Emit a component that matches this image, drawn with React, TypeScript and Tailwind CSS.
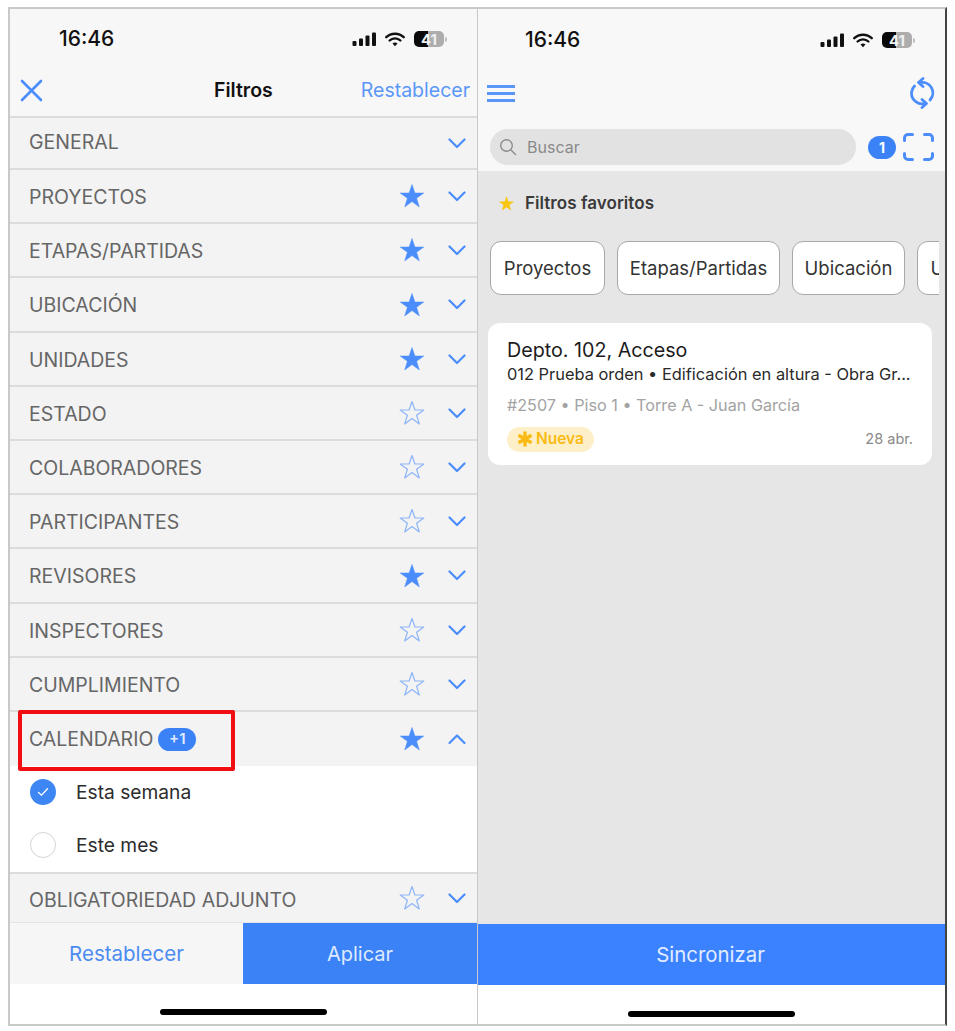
import React from "react";

const BLUE = "#4b8dfb";

function Star({ filled }: { filled: boolean }) {
  return (
    <svg width="26" height="26" viewBox="0 0 26 26" className="shrink-0">
      <path
        d="M13 1.5 L15.9 10 L24.8 10 L17.6 15.3 L20.3 23.9 L13 18.6 L5.7 23.9 L8.4 15.3 L1.2 10 L10.1 10 Z"
        fill={filled ? BLUE : "none"}
        stroke={filled ? BLUE : "#8db5f8"}
        strokeWidth={filled ? 0.5 : 1.2}
        strokeLinejoin="round"
      />
    </svg>
  );
}

function Chevron({ up }: { up?: boolean }) {
  return (
    <svg width="18" height="12" viewBox="0 0 18 12" className="mb-[1px] shrink-0">
      <path
        d={up ? "M1.5 10 L9 2.5 L16.5 10" : "M1.5 2.5 L9 10 L16.5 2.5"}
        fill="none"
        stroke={BLUE}
        strokeWidth="2.2"
        strokeLinecap="round"
        strokeLinejoin="round"
      />
    </svg>
  );
}

function StatusBar({ pad }: { pad: string }) {
  return (
    <div className={`flex items-center justify-between ${pad}`}>
      <span className="text-[21px] font-medium leading-[26px] text-[#111]">16:46</span>
      <div className="flex items-center">
        <svg width="25" height="14" viewBox="0 0 25 14" className="fill-[#111]">
          <rect x="0.5" y="9" width="4" height="5" rx="1" />
          <rect x="7" y="6.5" width="4" height="7.5" rx="1" />
          <rect x="13.5" y="3.5" width="4" height="10.5" rx="1" />
          <rect x="20" y="0.5" width="4" height="13.5" rx="1" />
        </svg>
        <svg width="20" height="15" viewBox="0 0 20 15" className="ml-[8px]">
          <path d="M1.3 5.2 C6 0.6 14 0.6 18.7 5.2" fill="none" stroke="#111" strokeWidth="2.4" strokeLinecap="round" />
          <path d="M4.6 8.5 C7.5 5.6 12.5 5.6 15.4 8.5" fill="none" stroke="#111" strokeWidth="2.4" strokeLinecap="round" />
          <path d="M7.5 11.4 L10 14.2 L12.5 11.4 C11 10.2 9 10.2 7.5 11.4 Z" fill="#111" />
        </svg>
        <div className="ml-[9px] flex h-[16px] w-[30px] items-center justify-center rounded-[5px] bg-[linear-gradient(90deg,#0a0a0a_47%,#adadad_47%)] text-[15px] font-bold leading-none text-[#f0f0f0]">
          41
        </div>
        <div className="ml-[1px] h-[5px] w-[2px] rounded-r-sm bg-[#bbbbbb]" />
      </div>
    </div>
  );
}

const rows: { label: string; fav: boolean; noStar?: boolean; h: string }[] = [
  { label: "GENERAL", fav: false, noStar: true, h: "h-[52px]" },
  { label: "PROYECTOS", fav: true, h: "h-[54px]" },
  { label: "ETAPAS/PARTIDAS", fav: true, h: "h-[54px]" },
  { label: "UBICACIÓN", fav: true, h: "h-[55px]" },
  { label: "UNIDADES", fav: true, h: "h-[54px]" },
  { label: "ESTADO", fav: false, h: "h-[54px]" },
  { label: "COLABORADORES", fav: false, h: "h-[54px]" },
  { label: "PARTICIPANTES", fav: false, h: "h-[54px]" },
  { label: "REVISORES", fav: true, h: "h-[55px]" },
  { label: "INSPECTORES", fav: false, h: "h-[54px]" },
  { label: "CUMPLIMIENTO", fav: false, h: "h-[54px]" },
];

function FilterRow({ label, fav, noStar, h }: { label: string; fav: boolean; noStar?: boolean; h: string }) {
  return (
    <div className={`flex items-center justify-between border-b-2 border-[#dcdcdc] bg-[#f3f3f3] pl-[19px] pr-[11px] ${h}`}>
      <span className={`text-[19.5px] text-[#666666] ${noStar ? "" : "mt-[3px]"}`}>{label}</span>
      <div className="flex items-center gap-[23px]">
        {!noStar && <Star filled={fav} />}
        <Chevron />
      </div>
    </div>
  );
}

function Chip({ label, w }: { label: string; w: string }) {
  return (
    <div className={`flex h-[54px] shrink-0 items-center justify-center rounded-[11px] border border-[#a8a8a8] bg-white pt-[2px] text-[18.5px] text-[#333333] ${w}`}>
      {label}
    </div>
  );
}

export default function App() {
  return (
    <div className="flex h-[1031px] w-[955px] items-start bg-white pl-[8px] pt-[7px] font-['Inter','Liberation_Sans',sans-serif]">
      {/* Left phone */}
      <div className="flex h-[1019px] w-[471px] shrink-0 flex-col border-2 border-[#c9c9c9] bg-white">
        <div className="flex h-[109px] shrink-0 flex-col border-b-2 border-[#dcdcdc] bg-[#f7f7f7]">
          <StatusBar pad="pl-[49px] pr-[30px] pt-[17px]" />
          <div className="mt-[24px] flex items-center justify-between pl-[10px] pr-[7px]">
            <svg width="23" height="23" viewBox="0 0 23 23">
              <path d="M2 2 L21 21 M21 2 L2 21" stroke={BLUE} strokeWidth="2.6" strokeLinecap="round" />
            </svg>
            <span className="ml-[83px] text-[19.5px] font-semibold text-[#111]">Filtros</span>
            <span className="text-[19.5px] text-[#5a97f8]">Restablecer</span>
          </div>
        </div>
        {rows.map((r) => (
          <FilterRow key={r.label} {...r} />
        ))}
        <div className="relative flex h-[54px] shrink-0 items-center justify-between bg-[#f3f3f3] pl-[19px] pr-[11px]">
          <div className="flex items-center gap-[5px]">
            <span className="mt-[2px] text-[19.5px] text-[#666666]">CALENDARIO</span>
            <span className="flex h-[23px] w-[38px] items-center justify-center rounded-full bg-[#3b82f6] text-[15px] font-semibold text-[#dfeaff]">
              +1
            </span>
          </div>
          <div className="flex items-center gap-[23px]">
            <Star filled />
            <Chevron up />
          </div>
          <div className="absolute left-[8px] top-[-2px] h-[61px] w-[217px] rounded-[2px] border-[4px] border-[#f20d12]" />
        </div>
        <div className="flex h-[108px] shrink-0 flex-col border-b-2 border-[#dcdcdc] bg-white pl-[20px]">
          <div className="flex h-[52px] items-center gap-[20px]">
            <div className="flex h-[26px] w-[26px] items-center justify-center rounded-full bg-[#3f86f5]">
              <svg width="12" height="10" viewBox="0 0 12 10">
                <path d="M1.5 5.5 L4.5 8.2 L10.5 1.8" fill="none" stroke="white" strokeWidth="1.3" strokeLinecap="round" />
              </svg>
            </div>
            <span className="text-[19.2px] text-[#2c2c2c]">Esta semana</span>
          </div>
          <div className="flex h-[54px] items-center gap-[20px]">
            <div className="h-[26px] w-[26px] rounded-full border border-[#d4d4d4]" />
            <span className="text-[19.2px] text-[#2c2c2c]">Este mes</span>
          </div>
        </div>
        <div className="flex h-[49px] shrink-0 items-center justify-between border-b border-[#e4e4e4] bg-[#f3f3f3] pl-[19px] pr-[11px]">
          <span className="mt-[5px] text-[19.5px] text-[#666666]">OBLIGATORIEDAD ADJUNTO</span>
          <div className="flex items-center gap-[23px]">
            <Star filled={false} />
            <Chevron />
          </div>
        </div>
        <div className="flex h-[61px] shrink-0">
          <div className="flex w-[233px] items-center justify-center bg-[#f6f6f6] pt-[2px] text-[20.5px] text-[#4c8bf0]">Restablecer</div>
          <div className="flex flex-1 items-center justify-center bg-[#3b82f6] text-[20px] text-[#dfeaff]">Aplicar</div>
        </div>
        <div className="flex flex-1 items-end justify-center pb-[9px]">
          <div className="h-[6px] w-[167px] rounded-full bg-black" />
        </div>
      </div>

      {/* Right phone */}
      <div className="-ml-[1px] flex h-[1019px] w-[469px] shrink-0 flex-col border-y-2 border-r-2 border-y-[#c9c9c9] border-r-[#444444] bg-white">
        <div className="flex h-[162px] shrink-0 flex-col bg-[#f8f8f8]">
          <StatusBar pad="pl-[47px] pr-[30px] pt-[18px]" />
          <div className="mt-[24px] flex h-[32px] items-center justify-between pl-[9px] pr-[9px]">
            <div className="flex w-[28px] flex-col gap-[4px]">
              <div className="h-[3px] bg-[#5a97f8]" />
              <div className="h-[3px] bg-[#5a97f8]" />
              <div className="h-[3px] bg-[#5a97f8]" />
            </div>
            <svg width="26" height="32" viewBox="0 0 26 32" fill="none">
              <path d="M10 5.6 A10.5 10.5 0 0 1 20 23" stroke={BLUE} strokeWidth="2.8" strokeLinecap="round" />
              <path d="M4.5 9 A10.5 10.5 0 0 0 15 26.4" stroke={BLUE} strokeWidth="2.8" strokeLinecap="round" />
              <path d="M13 1.5 L8.5 5.5 L13 9.5" stroke={BLUE} strokeWidth="2.8" strokeLinecap="round" strokeLinejoin="round" />
              <path d="M12 22.5 L16.5 26.5 L12 30.5" stroke={BLUE} strokeWidth="2.8" strokeLinecap="round" strokeLinejoin="round" />
            </svg>
          </div>
          <div className="mt-[20px] flex items-center pl-[12px]">
            <div className="flex h-[36px] w-[366px] items-center rounded-full bg-[#e2e2e2] pl-[9px]">
              <svg width="18" height="18" viewBox="0 0 18 18" fill="none">
                <circle cx="7.5" cy="7.5" r="5.8" stroke="#8d8d8d" strokeWidth="1.4" />
                <path d="M12 12 L16.5 16.5" stroke="#8d8d8d" strokeWidth="1.4" strokeLinecap="round" />
              </svg>
              <span className="ml-[10px] text-[16px] text-[#8a8a8a]">Buscar</span>
            </div>
            <div className="ml-[12px] flex h-[23px] w-[28px] items-center justify-center rounded-full bg-[#3b82f6] text-[14px] font-bold text-white">1</div>
            <svg width="31" height="28" viewBox="0 0 31 28" fill="none" className="ml-[7px]">
              <path
                d="M1.5 7.5 V5 A3.5 3.5 0 0 1 5 1.5 H9.5 M21.5 1.5 H26 A3.5 3.5 0 0 1 29.5 5 V7.5 M29.5 20.5 V23 A3.5 3.5 0 0 1 26 26.5 H21.5 M9.5 26.5 H5 A3.5 3.5 0 0 1 1.5 23 V20.5"
                stroke={BLUE}
                strokeWidth="3"
                strokeLinecap="round"
              />
            </svg>
          </div>
        </div>
        <div className="flex flex-1 flex-col bg-[#e6e6e6]">
          <div className="mt-[20px] flex items-center pl-[20px]">
            <svg width="17" height="17" viewBox="0 0 26 26">
              <path d="M13 1.5 L15.9 10 L24.8 10 L17.6 15.3 L20.3 23.9 L13 18.6 L5.7 23.9 L8.4 15.3 L1.2 10 L10.1 10 Z" fill="#f8c513" />
            </svg>
            <span className="ml-[10px] text-[17px] font-semibold tracking-[0.05px] text-[#3a3a3a]">Filtros favoritos</span>
          </div>
          <div className="ml-[12px] mt-[24px] flex w-[449px] gap-[12px] overflow-hidden">
            <Chip label="Proyectos" w="w-[115px]" />
            <Chip label="Etapas/Partidas" w="w-[163px]" />
            <Chip label="Ubicación" w="w-[113px]" />
            <Chip label="Unidades" w="w-[110px]" />
          </div>
          <div className="ml-[10px] mt-[28px] flex h-[142px] w-[444px] flex-col rounded-[12px] bg-white px-[19px] pt-[14px]">
            <span className="text-[19.7px] leading-[26px] text-[#1c1c1c]">Depto. 102, Acceso</span>
            <span className="mt-[1px] whitespace-nowrap text-[16.4px] leading-[21px] text-[#2a2a2a]">012 Prueba orden • Edificación en altura - Obra Gr...</span>
            <span className="mt-[10px] text-[16.2px] leading-[21px] text-[#a3a3a3]">#2507 • Piso 1 • Torre A - Juan García</span>
            <div className="mt-[11px] flex items-center justify-between">
              <div className="flex h-[25px] w-[87px] items-center justify-center gap-[3px] rounded-full bg-[#fdefc8] text-[15.5px] font-semibold text-[#f9bb13]">
                <svg width="16" height="16" viewBox="0 0 16 16">
                  <path d="M8 0.5 V15.5 M1.5 4.2 L14.5 11.8 M14.5 4.2 L1.5 11.8" stroke="#f9bb13" strokeWidth="3.4" />
                </svg>
                Nueva
              </div>
              <span className="text-[14.5px] text-[#8a8a8a]">28 abr.</span>
            </div>
          </div>
        </div>
        <div className="flex h-[61px] shrink-0 items-center justify-center bg-[#3a82ff] pr-[2px] pt-[2px] text-[20.4px] text-[#e2ecff]">Sincronizar</div>
        <div className="flex h-[39px] shrink-0 items-end justify-center pb-[7px]">
          <div className="h-[6px] w-[167px] rounded-full bg-black" />
        </div>
      </div>
    </div>
  );
}
